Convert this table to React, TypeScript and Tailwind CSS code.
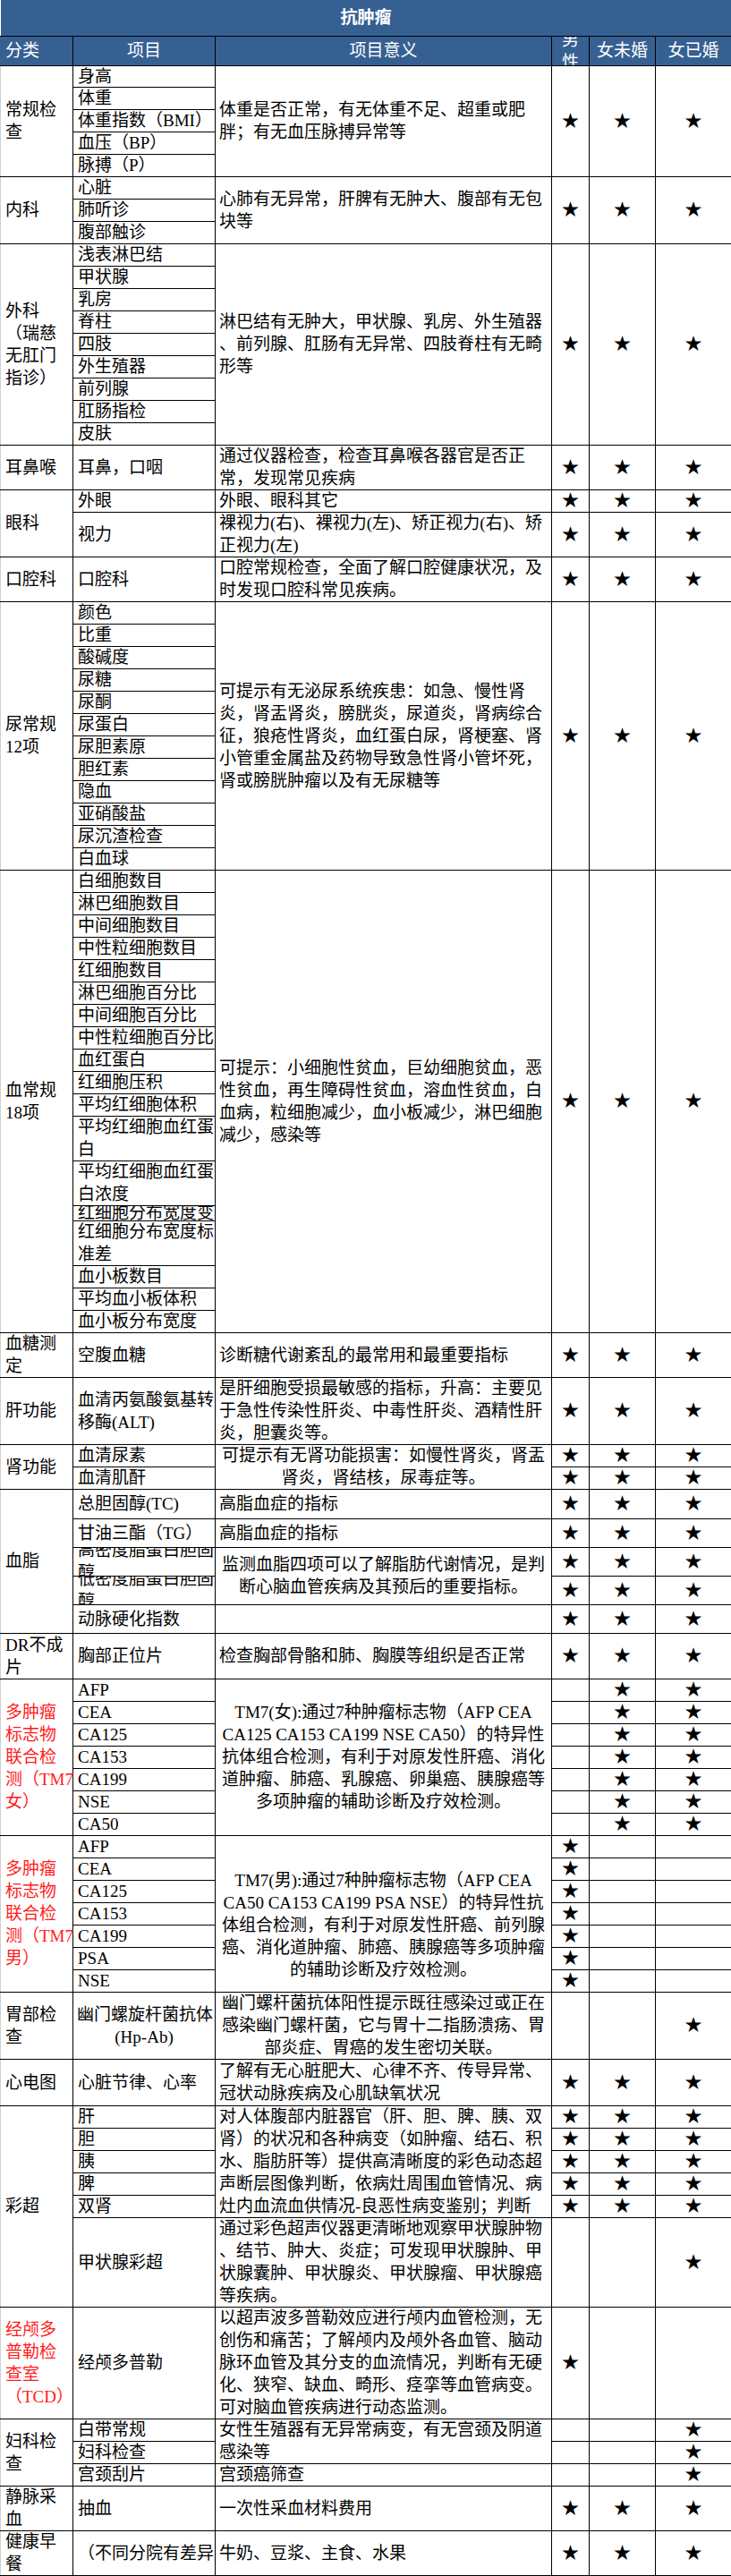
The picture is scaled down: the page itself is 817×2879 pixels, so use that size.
import React from 'react';

type Stars = [boolean, boolean, boolean];

interface Row {
  h: number;
  item: string[];
  itemCenter?: boolean;
  itemClip?: boolean;
  desc?: { lines: string[]; span?: number; center?: boolean };
  stars?: { v: Stars; span?: number };
}

interface Group {
  cat: string[];
  red?: boolean;
  rows: Row[];
}

const ALL: Stars = [true, true, true];
const FEMALE: Stars = [false, true, true];
const MALE: Stars = [true, false, false];
const MARRIED: Stars = [false, false, true];

// plain row: one item, its own description and stars
const one = (h: number, item: string[], desc: string[], v: Stars): Row => ({
  h,
  item,
  desc: { lines: desc },
  stars: { v },
});

const groups: Group[] = [
  {
    cat: ['常规检', '查'],
    rows: [
      {
        h: 24,
        item: ['身高'],
        desc: { lines: ['体重是否正常，有无体重不足、超重或肥', '胖；有无血压脉搏异常等'], span: 5 },
        stars: { v: ALL, span: 5 },
      },
      { h: 25, item: ['体重'] },
      { h: 25, item: ['体重指数（BMI）'] },
      { h: 25, item: ['血压（BP）'] },
      { h: 25, item: ['脉搏（P）'] },
    ],
  },
  {
    cat: ['内科'],
    rows: [
      {
        h: 25,
        item: ['心脏'],
        desc: { lines: ['心肺有无异常，肝脾有无肿大、腹部有无包', '块等'], span: 3 },
        stars: { v: ALL, span: 3 },
      },
      { h: 25, item: ['肺听诊'] },
      { h: 25, item: ['腹部触诊'] },
    ],
  },
  {
    cat: ['外科', '（瑞慈', '无肛门', '指诊）'],
    rows: [
      {
        h: 25,
        item: ['浅表淋巴结'],
        desc: {
          lines: ['淋巴结有无肿大，甲状腺、乳房、外生殖器', '、前列腺、肛肠有无异常、四肢脊柱有无畸', '形等'],
          span: 9,
        },
        stars: { v: ALL, span: 9 },
      },
      { h: 25, item: ['甲状腺'] },
      { h: 25, item: ['乳房'] },
      { h: 25, item: ['脊柱'] },
      { h: 25, item: ['四肢'] },
      { h: 25, item: ['外生殖器'] },
      { h: 25, item: ['前列腺'] },
      { h: 25, item: ['肛肠指检'] },
      { h: 25, item: ['皮肤'] },
    ],
  },
  {
    cat: ['耳鼻喉'],
    rows: [one(50, ['耳鼻，口咽'], ['通过仪器检查，检查耳鼻喉各器官是否正', '常，发现常见疾病'], ALL)],
  },
  {
    cat: ['眼科'],
    rows: [
      one(25, ['外眼'], ['外眼、眼科其它'], ALL),
      one(50, ['视力'], ['裸视力(右)、裸视力(左)、矫正视力(右)、矫', '正视力(左)'], ALL),
    ],
  },
  {
    cat: ['口腔科'],
    rows: [one(50, ['口腔科'], ['口腔常规检查，全面了解口腔健康状况，及', '时发现口腔科常见疾病。'], ALL)],
  },
  {
    cat: ['尿常规', '12项'],
    rows: [
      {
        h: 25,
        item: ['颜色'],
        desc: {
          lines: [
            '可提示有无泌尿系统疾患：如急、慢性肾',
            '炎，肾盂肾炎，膀胱炎，尿道炎，肾病综合',
            '征，狼疮性肾炎，血红蛋白尿，肾梗塞、肾',
            '小管重金属盐及药物导致急性肾小管坏死，',
            '肾或膀胱肿瘤以及有无尿糖等',
          ],
          span: 12,
        },
        stars: { v: ALL, span: 12 },
      },
      ...['比重', '酸碱度', '尿糖', '尿酮', '尿蛋白', '尿胆素原', '胆红素', '隐血', '亚硝酸盐', '尿沉渣检查', '白血球'].map(
        (n): Row => ({ h: 25, item: [n] })
      ),
    ],
  },
  {
    cat: ['血常规', '18项'],
    rows: [
      {
        h: 25,
        item: ['白细胞数目'],
        desc: {
          lines: [
            '可提示：小细胞性贫血，巨幼细胞贫血，恶',
            '性贫血，再生障碍性贫血，溶血性贫血，白',
            '血病，粒细胞减少，血小板减少，淋巴细胞',
            '减少，感染等',
          ],
          span: 18,
        },
        stars: { v: ALL, span: 18 },
      },
      ...['淋巴细胞数目', '中间细胞数目', '中性粒细胞数目', '红细胞数目', '淋巴细胞百分比', '中间细胞百分比', '中性粒细胞百分比', '血红蛋白', '红细胞压积', '平均红细胞体积'].map(
        (n): Row => ({ h: 25, item: [n] })
      ),
      { h: 50, item: ['平均红细胞血红蛋', '白'] },
      { h: 50, item: ['平均红细胞血红蛋', '白浓度'] },
      { h: 17, item: ['红细胞分布宽度变异'], itemClip: true },
      { h: 50, item: ['红细胞分布宽度标', '准差'] },
      { h: 25, item: ['血小板数目'] },
      { h: 25, item: ['平均血小板体积'] },
      { h: 25, item: ['血小板分布宽度'] },
    ],
  },
  {
    cat: ['血糖测', '定'],
    rows: [one(50, ['空腹血糖'], ['诊断糖代谢紊乱的最常用和最重要指标'], ALL)],
  },
  {
    cat: ['肝功能'],
    rows: [
      one(
        75,
        ['血清丙氨酸氨基转', '移酶(ALT)'],
        ['是肝细胞受损最敏感的指标，升高：主要见', '于急性传染性肝炎、中毒性肝炎、酒精性肝', '炎，胆囊炎等。'],
        ALL
      ),
    ],
  },
  {
    cat: ['肾功能'],
    rows: [
      {
        h: 25,
        item: ['血清尿素'],
        desc: { lines: ['可提示有无肾功能损害：如慢性肾炎，肾盂', '肾炎，肾结核，尿毒症等。'], span: 2, center: true },
        stars: { v: ALL },
      },
      { h: 25, item: ['血清肌酐'], stars: { v: ALL } },
    ],
  },
  {
    cat: ['血脂'],
    rows: [
      one(33, ['总胆固醇(TC)'], ['高脂血症的指标'], ALL),
      one(32, ['甘油三酯（TG）'], ['高脂血症的指标'], ALL),
      {
        h: 32,
        item: ['高密度脂蛋白胆固', '醇'],
        itemClip: true,
        desc: { lines: ['监测血脂四项可以了解脂肪代谢情况，是判', '断心脑血管疾病及其预后的重要指标。'], span: 2, center: true },
        stars: { v: ALL },
      },
      { h: 32, item: ['低密度脂蛋白胆固', '醇'], itemClip: true, stars: { v: ALL } },
      one(32, ['动脉硬化指数'], [], ALL),
    ],
  },
  {
    cat: ['DR不成', '片'],
    rows: [one(51, ['胸部正位片'], ['检查胸部骨骼和肺、胸膜等组织是否正常'], ALL)],
  },
  {
    cat: ['多肿瘤', '标志物', '联合检', '测（TM7', '女）'],
    red: true,
    rows: ['AFP', 'CEA', 'CA125', 'CA153', 'CA199', 'NSE', 'CA50'].map(
      (n, i): Row => ({
        h: 25,
        item: [n],
        desc:
          i === 0
            ? {
                lines: [
                  'TM7(女):通过7种肿瘤标志物（AFP CEA',
                  'CA125 CA153 CA199 NSE CA50）的特异性',
                  '抗体组合检测，有利于对原发性肝癌、消化',
                  '道肿瘤、肺癌、乳腺癌、卵巢癌、胰腺癌等',
                  '多项肿瘤的辅助诊断及疗效检测。',
                ],
                span: 7,
                center: true,
              }
            : undefined,
        stars: { v: FEMALE },
      })
    ),
  },
  {
    cat: ['多肿瘤', '标志物', '联合检', '测（TM7', '男）'],
    red: true,
    rows: ['AFP', 'CEA', 'CA125', 'CA153', 'CA199', 'PSA', 'NSE'].map(
      (n, i): Row => ({
        h: 25,
        item: [n],
        desc:
          i === 0
            ? {
                lines: [
                  '',
                  'TM7(男):通过7种肿瘤标志物（AFP CEA',
                  'CA50 CA153 CA199 PSA NSE）的特异性抗',
                  '体组合检测，有利于对原发性肝癌、前列腺',
                  '癌、消化道肿瘤、肺癌、胰腺癌等多项肿瘤',
                  '的辅助诊断及疗效检测。',
                ],
                span: 7,
                center: true,
              }
            : undefined,
        stars: { v: MALE },
      })
    ),
  },
  {
    cat: ['胃部检', '查'],
    rows: [
      {
        h: 75,
        item: ['幽门螺旋杆菌抗体', '(Hp-Ab)'],
        itemCenter: true,
        desc: {
          lines: ['幽门螺杆菌抗体阳性提示既往感染过或正在', '感染幽门螺杆菌，它与胃十二指肠溃疡、胃', '部炎症、胃癌的发生密切关联。'],
          center: true,
        },
        stars: { v: MARRIED },
      },
    ],
  },
  {
    cat: ['心电图'],
    rows: [one(52, ['心脏节律、心率'], ['了解有无心脏肥大、心律不齐、传导异常、', '冠状动脉疾病及心肌缺氧状况'], ALL)],
  },
  {
    cat: ['彩超'],
    rows: [
      {
        h: 25,
        item: ['肝'],
        desc: {
          lines: [
            '对人体腹部内脏器官（肝、胆、脾、胰、双',
            '肾）的状况和各种病变（如肿瘤、结石、积',
            '水、脂肪肝等）提供高清晰度的彩色动态超',
            '声断层图像判断，依病灶周围血管情况、病',
            '灶内血流血供情况-良恶性病变鉴别；判断',
          ],
          span: 5,
        },
        stars: { v: ALL },
      },
      { h: 25, item: ['胆'], stars: { v: ALL } },
      { h: 25, item: ['胰'], stars: { v: ALL } },
      { h: 25, item: ['脾'], stars: { v: ALL } },
      { h: 25, item: ['双肾'], stars: { v: ALL } },
      one(
        100,
        ['甲状腺彩超'],
        ['通过彩色超声仪器更清晰地观察甲状腺肿物', '、结节、肿大、炎症；可发现甲状腺肿、甲', '状腺囊肿、甲状腺炎、甲状腺瘤、甲状腺癌', '等疾病。'],
        MARRIED
      ),
    ],
  },
  {
    cat: ['经颅多', '普勒检', '查室', '（TCD）'],
    red: true,
    rows: [
      one(
        125,
        ['经颅多普勒'],
        [
          '以超声波多普勒效应进行颅内血管检测，无',
          '创伤和痛苦；了解颅内及颅外各血管、脑动',
          '脉环血管及其分支的血流情况，判断有无硬',
          '化、狭窄、缺血、畸形、痉挛等血管病变。',
          '可对脑血管疾病进行动态监测。',
        ],
        MALE
      ),
    ],
  },
  {
    cat: ['妇科检', '查'],
    rows: [
      {
        h: 25,
        item: ['白带常规'],
        desc: { lines: ['女性生殖器有无异常病变，有无宫颈及阴道', '感染等'], span: 2 },
        stars: { v: MARRIED },
      },
      { h: 25, item: ['妇科检查'], stars: { v: MARRIED } },
      one(25, ['宫颈刮片'], ['宫颈癌筛查'], MARRIED),
    ],
  },
  {
    cat: ['静脉采', '血'],
    rows: [one(50, ['抽血'], ['一次性采血材料费用'], ALL)],
  },
  {
    cat: ['健康早', '餐'],
    rows: [{ ...one(50, ['（不同分院有差异）'], ['牛奶、豆浆、主食、水果'], ALL), itemClip: true }],
  },
];

const spanHeight = (rows: Row[], start: number, span = 1) =>
  rows.slice(start, start + span).reduce((s, r) => s + r.h, 0);

// fixed-height cell body; only cells that are cut in the sheet clip their text
function Box({
  h,
  clip,
  className = '',
  children,
}: {
  h: number;
  clip?: boolean;
  className?: string;
  children?: React.ReactNode;
}) {
  return (
    <div
      className={`flex flex-col justify-center ${clip ? 'overflow-hidden' : 'overflow-visible'} ${className}`}
      style={{ height: h - 1 }}
    >
      {children}
    </div>
  );
}

function Lines({ lines, center }: { lines: string[]; center?: boolean }) {
  return (
    <>
      {lines.map((l, i) => (
        <div key={i} className={`whitespace-nowrap ${center ? 'text-center' : ''}`}>
          {l || '\u00a0'}
        </div>
      ))}
    </>
  );
}

const cell = 'border border-black p-0 align-middle';

export default function App() {
  return (
    <div
      className="w-[817px] bg-white text-[19px] leading-[25px] text-black"
      style={{ fontFamily: '"Liberation Serif", "Noto Sans CJK SC", serif' }}
    >
      <table className="w-[817px] table-fixed border-collapse">
        <colgroup>
          <col className="w-[81px]" />
          <col className="w-[159px]" />
          <col className="w-[376px]" />
          <col className="w-[42px]" />
          <col className="w-[74px]" />
          <col className="w-[85px]" />
        </colgroup>
        <thead>
          <tr className="h-[40px]">
            <th colSpan={6} className="border-b border-black bg-[#366092] p-0 text-center font-bold text-white">
              <Box h={40}>抗肿瘤</Box>
            </th>
          </tr>
          <tr className="h-[33px] bg-[#366092] text-white">
            <th className="border border-black border-l-[#366092] p-0 text-left font-normal">
              <Box h={33} className="pl-[5px]">分类</Box>
            </th>
            <th className={`${cell} font-normal`}>
              <Box h={33}>项目</Box>
            </th>
            <th className={`${cell} font-normal`}>
              <Box h={33}>项目意义</Box>
            </th>
            <th className={`${cell} font-normal`}>
              <Box h={33} clip>
                <Lines lines={['男', '性']} center />
              </Box>
            </th>
            <th className={`${cell} font-normal`}>
              <Box h={33}>女未婚</Box>
            </th>
            <th className={`${cell} font-normal`}>
              <Box h={33}>女已婚</Box>
            </th>
          </tr>
        </thead>
        <tbody>
          {groups.map((g, gi) =>
            g.rows.map((r, ri) => (
              <tr key={`${gi}-${ri}`} style={{ height: r.h }}>
                {ri === 0 && (
                  <td rowSpan={g.rows.length} className={`${cell} border-l-[#d0d0d0]`}>
                    <Box h={spanHeight(g.rows, 0, g.rows.length)} className={`px-[5px] ${g.red ? 'text-[#ff1a1a]' : ''}`}>
                      <Lines lines={g.cat} />
                    </Box>
                  </td>
                )}
                <td className={cell}>
                  <Box h={r.h} clip={r.itemClip} className={r.itemCenter ? 'px-[4px]' : 'pl-[5px]'}>
                    <Lines lines={r.item} center={r.itemCenter} />
                  </Box>
                </td>
                {r.desc && (
                  <td rowSpan={r.desc.span ?? 1} className={cell}>
                    <Box h={spanHeight(g.rows, ri, r.desc.span)} className="px-[4px]">
                      <Lines lines={r.desc.lines} center={r.desc.center} />
                    </Box>
                  </td>
                )}
                {r.stars &&
                  r.stars.v.map((on, si) => (
                    <td key={si} rowSpan={r.stars!.span ?? 1} className={`${cell} text-center`}>
                      <Box h={spanHeight(g.rows, ri, r.stars!.span)}>{on ? '★' : ''}</Box>
                    </td>
                  ))}
              </tr>
            ))
          )}
        </tbody>
      </table>
    </div>
  );
}
